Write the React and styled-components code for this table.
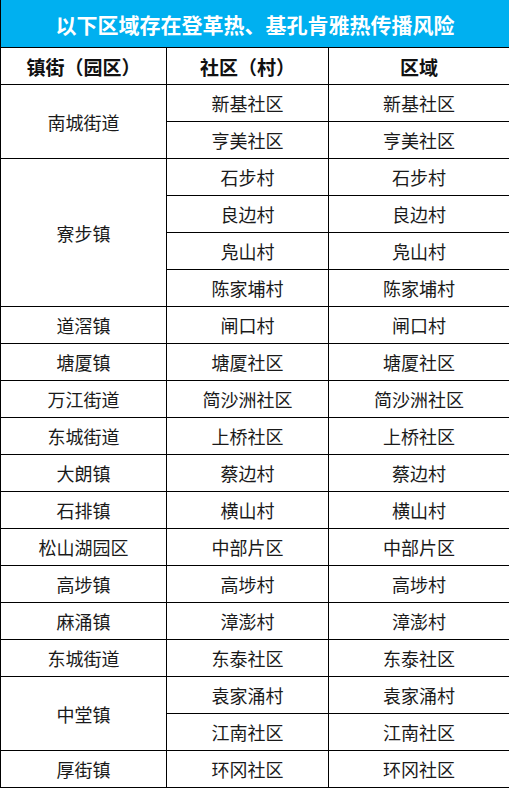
import React from "react";
import styled, { createGlobalStyle } from "styled-components";

const GlobalStyle = createGlobalStyle`
  html, body {
    margin: 0;
    padding: 0;
    background: #ffffff;
  }
  body {
    font-family: "Microsoft YaHei", "Noto Sans CJK SC", "Noto Sans", sans-serif;
  }
`;

const rows = [
  { town: "南城街道", places: ["新基社区", "亨美社区"] },
  { town: "寮步镇", places: ["石步村", "良边村", "凫山村", "陈家埔村"] },
  { town: "道滘镇", places: ["闸口村"] },
  { town: "塘厦镇", places: ["塘厦社区"] },
  { town: "万江街道", places: ["简沙洲社区"] },
  { town: "东城街道", places: ["上桥社区"] },
  { town: "大朗镇", places: ["蔡边村"] },
  { town: "石排镇", places: ["横山村"] },
  { town: "松山湖园区", places: ["中部片区"] },
  { town: "高埗镇", places: ["高埗村"] },
  { town: "麻涌镇", places: ["漳澎村"] },
  { town: "东城街道", places: ["东泰社区"] },
  { town: "中堂镇", places: ["袁家涌村", "江南社区"] },
  { town: "厚街镇", places: ["环冈社区"] },
];

const RiskTable = styled.table`
  width: 509px;
  border-collapse: collapse;
  table-layout: fixed;
  font-family: "Microsoft YaHei", "Noto Sans CJK SC", "Noto Sans", sans-serif;
`;

const TitleCell = styled.th`
  height: 47px;
  padding: 0;
  background: #00b0f0;
  color: #ffffff;
  font-size: 21px;
  font-weight: 700;
  text-align: center;
  border: 1px solid #000;
  border-top: none;
`;

const HeadCell = styled.th`
  height: 36px;
  padding: 0;
  color: #111;
  font-size: 19px;
  font-weight: 700;
  text-align: center;
  border: 1px solid #000;
`;

const Cell = styled.td`
  height: 36px;
  padding: 0;
  color: #1a1a1a;
  font-size: 18px;
  text-align: center;
  vertical-align: middle;
  border: 1px solid #000;
`;

export default function App() {
  return (
    <>
      <GlobalStyle />
      <RiskTable>
        <colgroup>
          <col style={{ width: 166 }} />
          <col style={{ width: 162 }} />
          <col style={{ width: 181 }} />
        </colgroup>
        <thead>
          <tr>
            <TitleCell colSpan={3}>以下区域存在登革热、基孔肯雅热传播风险</TitleCell>
          </tr>
          <tr>
            <HeadCell>镇街（园区）</HeadCell>
            <HeadCell>社区（村）</HeadCell>
            <HeadCell>区域</HeadCell>
          </tr>
        </thead>
        <tbody>
          {rows.map((group, gi) =>
            group.places.map((place, pi) => (
              <tr key={`${gi}-${pi}`}>
                {pi === 0 && (
                  <Cell rowSpan={group.places.length}>{group.town}</Cell>
                )}
                <Cell>{place}</Cell>
                <Cell>{place}</Cell>
              </tr>
            ))
          )}
        </tbody>
      </RiskTable>
    </>
  );
}
